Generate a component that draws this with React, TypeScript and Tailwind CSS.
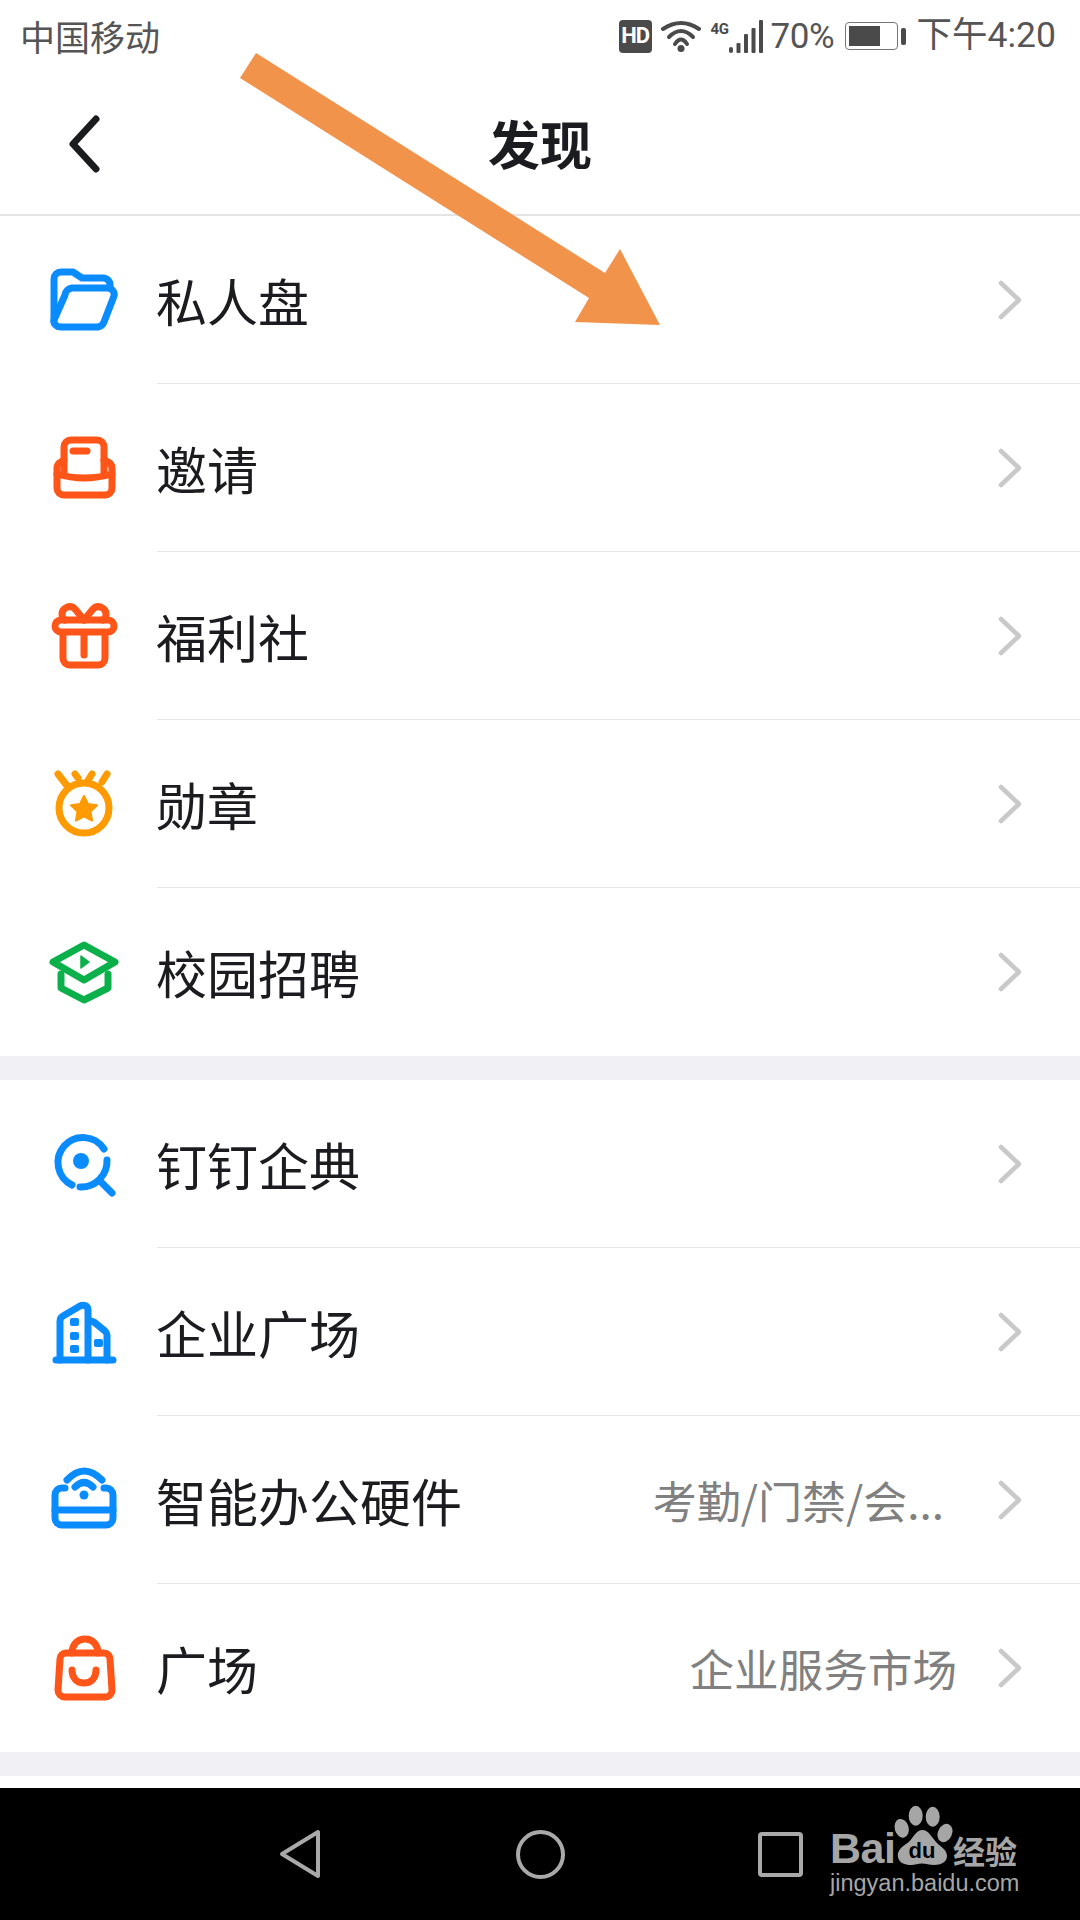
import type { ReactNode } from 'react';

const BLUE = '#0a8cff';
const RED = '#ff5518';

function Icon({ color, children }: { color: string; children: ReactNode }) {
    return (
        <svg
            viewBox="0 0 80 80"
            className="w-[80px] h-[80px] shrink-0"
            fill="none"
            stroke={color}
            strokeWidth={7}
            strokeLinecap="round"
            strokeLinejoin="round"
        >
            {children}
        </svg>
    );
}

const icons = {
    folder: (
        <Icon color={BLUE}>
            <path d="M10 60V19a7 7 0 0 1 7-7h12l9 6h21a7 7 0 0 1 7 8" />
            <path d="M21 35a8 8 0 0 1 7-7h35c5 0 8 4 7 8l-10 26a8 8 0 0 1-6 5H17c-5 0-8-4-7-7z" />
        </Icon>
    ),
    invite: (
        <Icon color={RED}>
            <path d="M20 47V19a7 7 0 0 1 7-7h26a7 7 0 0 1 7 7v28" />
            <path d="M20 32l-3 2a7 7 0 0 0-4 6v20a7 7 0 0 0 7 7h41a7 7 0 0 0 7-7V40a7 7 0 0 0-4-6l-4-2" />
            <path d="M13 46Q40 54 68 46" />
            <path d="M29 23h14" />
        </Icon>
    ),
    gift: (
        <Icon color={RED}>
            <rect x="11" y="24" width="59" height="12" rx="6" />
            <path d="M19 37v25a7 7 0 0 0 7 7h28a7 7 0 0 0 7-7V37" />
            <path d="M40 37v22" />
            <path d="M40 24L31 13c-5-5-13-1-13 5 0 3 1 5 3 6" />
            <path d="M40 24l9-11c5-5 13-1 13 5 0 3-1 5-3 6" />
        </Icon>
    ),
    medal: (
        <Icon color="#ff9a00">
            <circle cx="40" cy="44" r="25" />
            <path d="M14 10l10 13M31 10l3 4M48 10l-5 8M63 10l-5 8" />
            <path
                d="M40 32l4 8 9 1.300-6.500 6.300 1.600 9-8.100-4.300-8.100 4.300 1.600-9-6.500-6.300 9-1.300z"
                fill="#ff9a00"
                strokeWidth={2}
            />
        </Icon>
    ),
    campus: (
        <Icon color="#0cb04a">
            <path d="M9 30l31-17 31 17-31 18z" />
            <path d="M17 42v14l23 12 24-12V42" />
            <path d="M37 24l8 6-8 6z" fill="#0cb04a" strokeWidth={1.5} />
        </Icon>
    ),
    search: (
        <Icon color={BLUE}>
            <path d="M60 25A25 25 0 1 0 28 61" />
            <path d="M36 63A26 26 0 0 0 63 36" />
            <circle cx="37" cy="37" r="8" fill={BLUE} stroke="none" />
            <path d="M57 58l11 11" />
        </Icon>
    ),
    building: (
        <Icon color={BLUE}>
            <path d="M12 68h57" />
            <path d="M16 68V29a6 6 0 0 1 3-5l17-10c4-2 8 0 8 4v50" />
            <path d="M47 29l3 1 11 9a6 6 0 0 1 2 4v25" />
            <rect x="26" y="26" width="9" height="8" rx="2" fill={BLUE} stroke="none" />
            <rect x="26" y="40" width="9" height="8" rx="2" fill={BLUE} stroke="none" />
            <rect x="26" y="53" width="9" height="8" rx="2" fill={BLUE} stroke="none" />
            <rect x="50" y="47" width="9" height="8" rx="2" fill={BLUE} stroke="none" />
        </Icon>
    ),
    hardware: (
        <Icon color={BLUE}>
            <path d="M23 20Q40 2 58 20" />
            <path d="M31 27Q40 18 49 27" />
            <circle cx="40" cy="35" r="4.500" fill={BLUE} stroke="none" />
            <path d="M21 28h-3a7 7 0 0 0-7 7v23a7 7 0 0 0 7 7h44a7 7 0 0 0 7-7V35a7 7 0 0 0-7-7h-2" />
            <path d="M11 50h58" />
        </Icon>
    ),
    bag: (
        <Icon color={RED}>
            <path d="M22 25h38a6 6 0 0 1 6 6l2 31a7 7 0 0 1-7 7H21a7 7 0 0 1-7-7l2-31a6 6 0 0 1 6-6z" />
            <path d="M28 25c0-8 5-14 13-14s13 6 13 14" />
            <path d="M28 42c0 8 5 13 12 13s12-5 12-13" />
        </Icon>
    ),
};

type Row = { icon: ReactNode; label: string; note?: string; noteClass?: string };

const firstGroup: Row[] = [
    { icon: icons.folder, label: '私人盘' },
    { icon: icons.invite, label: '邀请' },
    { icon: icons.gift, label: '福利社' },
    { icon: icons.medal, label: '勋章' },
    { icon: icons.campus, label: '校园招聘' },
];

const secondGroup: Row[] = [
    { icon: icons.search, label: '钉钉企典' },
    { icon: icons.building, label: '企业广场' },
    { icon: icons.hardware, label: '智能办公硬件', note: '考勤/门禁/会...', noteClass: 'text-[44px] mr-[54px]' },
    { icon: icons.bag, label: '广场', note: '企业服务市场', noteClass: 'text-[44.600px] mr-[41px]' },
];

function ListGroup({ rows }: { rows: Row[] }) {
    return (
        <div className="bg-white">
            {rows.map((row, i) => (
                <div key={row.label} className="flex items-center h-[168px] pl-[44px]">
                    {row.icon}
                    <div
                        className={`flex flex-1 items-center h-full ml-[33px] pr-[58px] ${i < rows.length - 1 ? 'border-b-[1.5px] border-[#e6e6e6]' : ''
                            }`}
                    >
                        <span className="flex-1 text-[51px] leading-none text-[#1a1c1f] -ml-[1px] mt-[1px]">{row.label}</span>
                        {row.note && (
                            <span className={`leading-none text-[#808080] ${row.noteClass}`}>{row.note}</span>
                        )}
                        <svg viewBox="0 0 24 40" className="w-[24px] h-[40px]" fill="none" stroke="#c9c9c9" strokeWidth={4.5} strokeLinecap="round" strokeLinejoin="round">
                            <path d="M3 3l18 17L3 37" />
                        </svg>
                    </div>
                </div>
            ))}
        </div>
    );
}

function StatusBar() {
    return (
        <div className="flex items-center justify-between h-[70px] pl-[20px] pr-[24px] text-[#555555]">
            <span className="text-[35px] leading-none">中国移动</span>
            <div className="flex items-center pt-[2px]">
                <div className="flex items-center justify-center w-[33px] h-[33px] rounded-[4px] bg-[#4a4a4a] text-white text-[22px] font-bold leading-none font-['Roboto',sans-serif] tracking-[-1px]">
                    HD
                </div>
                <svg viewBox="0 0 40 33" className="w-[40px] h-[33px] ml-[9px]" fill="none" stroke="#4a4a4a" strokeWidth={4} strokeLinecap="round">
                    <path d="M2 9Q20-3 38 9" />
                    <path d="M8 17Q20 5 32 17" />
                    <path d="M14 24Q20 15 26 24" />
                    <circle cx="20" cy="28.500" r="3.500" fill="#4a4a4a" stroke="none" />
                </svg>
                <div className="flex items-start ml-[10px] h-[33px]">
                    <span className="w-[18px] text-[15px] leading-[15px] font-bold font-['Roboto',sans-serif] text-[#4a4a4a] tracking-[-0.5px] mt-[2px]">4G</span>
                    <svg viewBox="0 0 34 33" className="w-[34px] h-[33px]" fill="#4a4a4a">
                        <rect x="0" y="27" width="4" height="6" rx="2" />
                        <rect x="7.500" y="23" width="4" height="10" rx="1" />
                        <rect x="15" y="14" width="4" height="19" rx="1" />
                        <rect x="22.500" y="8" width="4" height="25" rx="1" />
                        <rect x="30" y="0" width="4" height="33" rx="1" />
                    </svg>
                </div>
                <span className="ml-[8px] w-[63px] text-[35px] leading-none font-['Roboto',sans-serif] tracking-[-0.5px]">70%</span>
                <div className="flex items-center ml-[11px]">
                    <div className="flex w-[53px] h-[28px] rounded-[4px] border-[1.5px] border-[#777777] p-[3px]">
                        <div className="w-[31px] bg-[#4a4a4a]" />
                    </div>
                    <div className="w-[5px] h-[17px] ml-[3px] rounded-[2px] bg-[#4a4a4a]" />
                </div>
                <span className="ml-[11px] text-[35.500px] leading-none font-['Roboto','Noto_Sans_CJK_SC',sans-serif]">下午4:20</span>
            </div>
        </div>
    );
}

function NavBar() {
    return (
        <div className="relative flex items-center h-[132px] pl-[279px] bg-black">
            <svg viewBox="0 0 42 50" className="w-[42px] h-[50px]" fill="none" stroke="#a9a9a9" strokeWidth={4} strokeLinejoin="round">
                <path d="M39 3v44L3 25z" />
            </svg>
            <div className="w-[49px] h-[49px] ml-[195px] rounded-full border-[4px] border-[#a9a9a9]" />
            <div className="w-[45px] h-[45px] ml-[193px] rounded-[4px] border-[4px] border-[#a9a9a9]" />

            {/* Baidu watermark */}
            <div className="absolute left-[830px] top-[12px] w-[195px] text-[#a6a6a6]">
                <div className="flex items-end h-[68px]">
                    <span className="w-[62px] text-[43px] leading-[40px] font-bold font-['Liberation_Sans',sans-serif] tracking-[-0.5px]">Bai</span>
                    <svg viewBox="0 0 70 68" className="w-[70px] h-[68px] -ml-[7px] shrink-0" fill="#a6a6a6">
                        <ellipse cx="16.700" cy="28.300" rx="7" ry="9.500" transform="rotate(-15 16.700 28.300)" />
                        <ellipse cx="30.700" cy="15.700" rx="7" ry="10" />
                        <ellipse cx="47.700" cy="16.700" rx="7" ry="10" />
                        <ellipse cx="60" cy="33" rx="7" ry="9.500" transform="rotate(25 60 33)" />
                        <path d="M37 30C30 30 28 40 21 44 15 48 12 52 13 57 14 63 20 65 26 65 30 65 33 63.500 37 63.500 41 63.500 44 65 49 65 56 65 62 62 62 56 62 50 56 47 52 43 47 38 44 30 37 30Z" />
                        <text x="37" y="58" textAnchor="middle" fontSize="22" fontWeight="700" fill="#000000" fontFamily="Liberation Sans">du</text>
                    </svg>
                    <span className="-ml-[2px] text-[32px] leading-[36px] font-bold">经验</span>
                </div>
                <div className="text-[23.500px] leading-[30px] font-['Liberation_Sans',sans-serif]">jingyan.baidu.com</div>
            </div>
        </div>
    );
}

export default function App() {
    return (
        <div className="relative w-[1080px] h-[1920px] overflow-hidden bg-white font-['Noto_Sans_CJK_SC','Noto_Sans',sans-serif]">
            <StatusBar />

            {/* Header */}
            <div className="grid grid-cols-[1fr_auto_1fr] items-center h-[146px] border-b-2 border-[#e4e4e4]">
                <svg viewBox="0 0 32 58" className="w-[32px] h-[58px] ml-[68px] mt-[4px]" fill="none" stroke="#1a1c1f" strokeWidth={7} strokeLinecap="round" strokeLinejoin="round">
                    <path d="M28 4L5 29l23 25" />
                </svg>
                <h1 className="text-[52px] leading-none font-bold text-[#1a1c1f] mt-[2px]">发现</h1>
            </div>

            <ListGroup rows={firstGroup} />
            <div className="h-[24px] bg-[#f1f1f5]" />
            <ListGroup rows={secondGroup} />
            <div className="h-[24px] bg-[#f1f1f5]" />
            <div className="h-[12px] bg-white" />
            <NavBar />

            {/* Annotation arrow drawn over the screenshot */}
            <svg viewBox="0 0 1080 400" className="absolute left-0 top-0 w-[1080px] h-[400px] pointer-events-none">
                <polygon points="256,53 240,78 589,298 575,322 660,325 620,249 605,273" fill="#f2934c" />
            </svg>
        </div>
    );
}
